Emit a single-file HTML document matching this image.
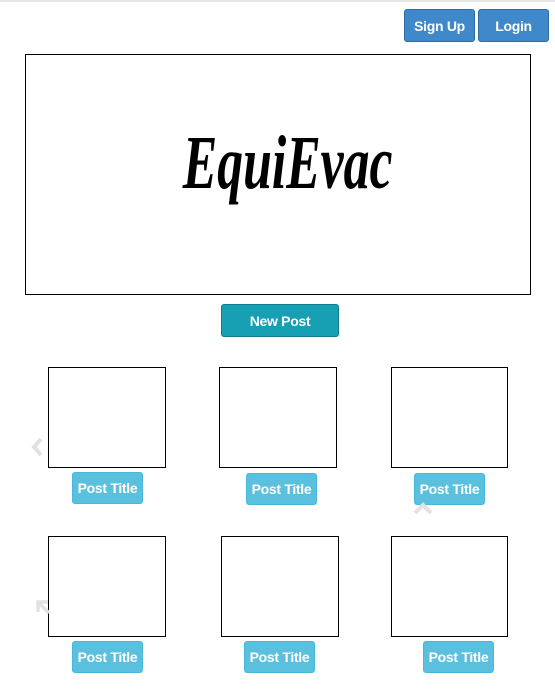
<!DOCTYPE html>
<html><head><style>
body{margin:0;width:555px;height:700px;background:#fff;position:relative;overflow:hidden;font-family:"Liberation Sans",sans-serif}
.a{position:absolute;box-sizing:border-box}
.btn{position:absolute;box-sizing:border-box;color:#fff;font-size:14px;font-weight:bold;display:flex;align-items:center;justify-content:center;border-radius:3px;letter-spacing:-0.3px}
.blue{background:#3f88c9;border:1px solid #2e6da4}
.pt{background:#5bc0de;border:1px solid #46b8da;width:71px;height:32px}
.box{position:absolute;box-sizing:border-box;border:1px solid #000;width:118px;height:101px}
</style></head><body>
<div class="a" style="left:0;top:0;width:555px;height:2px;background:#e6e6e6"></div>
<div class="btn blue" style="left:404px;top:9px;width:71px;height:33px">Sign Up</div>
<div class="btn blue" style="left:478px;top:9px;width:71px;height:33px">Login</div>
<div class="a" style="left:25px;top:54px;width:506px;height:241px;border:1px solid #000"></div>
<div class="a" style="left:25px;top:118px;width:506px;text-align:center;font-family:'Liberation Serif',serif;font-style:italic;font-weight:bold;font-size:76px;line-height:90px;color:#000;transform:scaleX(0.68);transform-origin:283px 0">EquiEvac</div>
<div class="btn" style="left:221px;top:304px;width:118px;height:33px;background:#179fb4;border:1px solid #117a8b">New Post</div>
<div class="box" style="left:48px;top:367px"></div>
<div class="box" style="left:219px;top:367px"></div>
<div class="box" style="left:391px;top:367px;width:117px"></div>
<div class="btn pt" style="left:72px;top:472px">Post Title</div>
<div class="btn pt" style="left:246px;top:473px">Post Title</div>
<div class="btn pt" style="left:414px;top:473px">Post Title</div>
<div class="box" style="left:48px;top:536px"></div>
<div class="box" style="left:221px;top:536px"></div>
<div class="box" style="left:391px;top:536px;width:117px"></div>
<div class="btn pt" style="left:72px;top:641px">Post Title</div>
<div class="btn pt" style="left:244px;top:641px">Post Title</div>
<div class="btn pt" style="left:423px;top:641px">Post Title</div>
<svg class="a" style="left:28px;top:436px" width="20" height="22"><path d="M13 3L6 11L13 19" stroke="#e2e2e2" stroke-width="4" fill="none"/></svg>
<svg class="a" style="left:412px;top:500px" width="22" height="16"><path d="M3 13L11 5L19 13" stroke="#e2e2e2" stroke-width="4" fill="none"/></svg>
<svg class="a" style="left:34px;top:598px" width="18" height="18"><path d="M4 14V4H14M4 4L15 15" stroke="#e2e2e2" stroke-width="3.5" fill="none"/></svg>
</body></html>
